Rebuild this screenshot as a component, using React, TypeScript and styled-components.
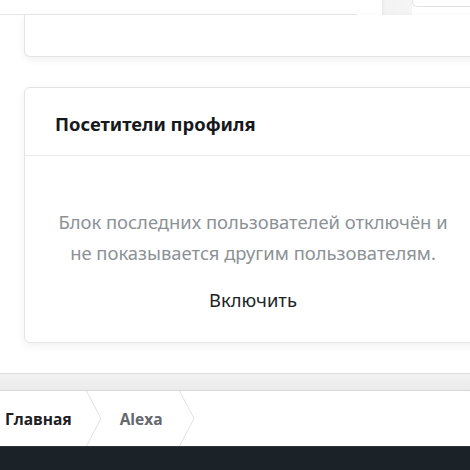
import React from 'react';
import styled, { createGlobalStyle } from 'styled-components';

const GlobalStyle = createGlobalStyle`
  html, body {
    margin: 0;
    padding: 0;
    background: #ffffff;
    overflow: hidden;
  }
`;

const Page = styled.div`
  width: 470px;
  height: 470px;
  overflow: hidden;
  display: flex;
  flex-direction: column;
  background: #fff;
  font-family: 'Noto Sans', 'Open Sans', sans-serif;
`;

const TopStrip = styled.div`
  height: 15px;
  display: flex;
  flex-shrink: 0;
`;

const TopLeft = styled.div`
  width: 357px;
  border-bottom: 1px solid #e6e6e6;
  box-sizing: border-box;
`;

const TopGap = styled.div`
  width: 25px;
`;

const SideColumn = styled.div`
  width: 30px;
  background: linear-gradient(90deg, #e9e9e9 0, #f3f3f3 3px, #f5f5f5 100%);
`;

const SideBox = styled.div`
  flex: 1;
  height: 7px;
  background: #fff;
  border-left: 1px solid #e2e2e2;
  border-bottom: 1px solid #e2e2e2;
  border-bottom-left-radius: 5px;
  box-sizing: border-box;
`;

const Content = styled.div`
  padding-left: 24px;
  display: flex;
  flex-direction: column;
  gap: 30px;
  flex-shrink: 0;
`;

const Card = styled.div<{ $cut?: boolean }>`
  width: 458px;
  background: #fff;
  border: 1px solid #e4e4e4;
  border-radius: ${(p) => (p.$cut ? '0 0 6px 6px' : '6px')};
  ${(p) => (p.$cut ? 'border-top: none;' : '')}
  box-shadow: 0 3px 8px rgba(0, 0, 0, 0.06);
  box-sizing: border-box;
`;

const EmptyCard = styled(Card)`
  height: 42px;
`;

const CardHeader = styled.div`
  height: 68px;
  box-sizing: border-box;
  display: flex;
  align-items: center;
  padding: 4px 0 0 30px;
  border-bottom: 1px solid #ebebeb;
  font-size: 18.4px;
  font-weight: 700;
  color: #16191c;
`;

const CardBody = styled.div`
  height: 186px;
  box-sizing: border-box;
  padding-top: 50px;
  display: flex;
  flex-direction: column;
  align-items: center;
  text-align: center;
`;

const Notice = styled.p`
  margin: 0;
  font-size: 18.4px;
  line-height: 31px;
  color: #8c9196;
`;

const EnableButton = styled.button`
  margin-top: 20px;
  border: none;
  background: none;
  padding: 0;
  font-family: inherit;
  font-size: 18.4px;
  line-height: 24px;
  color: #202326;
  cursor: pointer;
`;

const Spacer = styled.div`
  height: 30px;
  flex-shrink: 0;
`;

const GrayBar = styled.div`
  height: 18px;
  flex-shrink: 0;
  border-top: 1px solid #dcdcdc;
  border-bottom: 1px solid #d8d8d8;
  background: linear-gradient(180deg, #f2f2f2, #ebebeb);
  box-sizing: border-box;
`;

const Breadcrumbs = styled.nav`
  height: 55px;
  flex-shrink: 0;
  display: flex;
  align-items: stretch;
  background: #fff;
  font-family: 'Open Sans', 'Noto Sans', sans-serif;
`;

const Crumb = styled.a<{ $active?: boolean }>`
  display: flex;
  align-items: center;
  padding: 0 ${(p) => (p.$active ? '14px' : '16px')} 0 ${(p) => (p.$active ? '5px' : '18px')};
  font-size: 15.5px;
  font-weight: 700;
  color: ${(p) => (p.$active ? '#1c2025' : '#63686d')};
  text-decoration: none;
`;

const Chevron = styled.svg`
  width: 16px;
  height: 55px;
  flex-shrink: 0;
`;

const Footer = styled.footer`
  flex: 1;
  background: #1b2329;
  border-top: 1px solid #2c363c;
`;

const Sep = () => (
  <Chevron viewBox="0 0 16 55">
    <polyline points="0.5,0 15,27.5 0.5,55" fill="none" stroke="#e2e2e2" strokeWidth="1" />
  </Chevron>
);

const App: React.FC = () => {
  return (
    <Page>
      <GlobalStyle />
      <TopStrip>
        <TopLeft />
        <TopGap />
        <SideColumn />
        <SideBox />
      </TopStrip>
      <Content>
        <EmptyCard $cut />
        <Card>
          <CardHeader>Посетители профиля</CardHeader>
          <CardBody>
            <Notice>
              Блок последних пользователей отключён и
              <br />
              не показывается другим пользователям.
            </Notice>
            <EnableButton>Включить</EnableButton>
          </CardBody>
        </Card>
      </Content>
      <Spacer />
      <GrayBar />
      <Breadcrumbs>
        <Crumb $active href="#">Главная</Crumb>
        <Sep />
        <Crumb href="#">Alexa</Crumb>
        <Sep />
      </Breadcrumbs>
      <Footer />
    </Page>
  );
};

export default App;
